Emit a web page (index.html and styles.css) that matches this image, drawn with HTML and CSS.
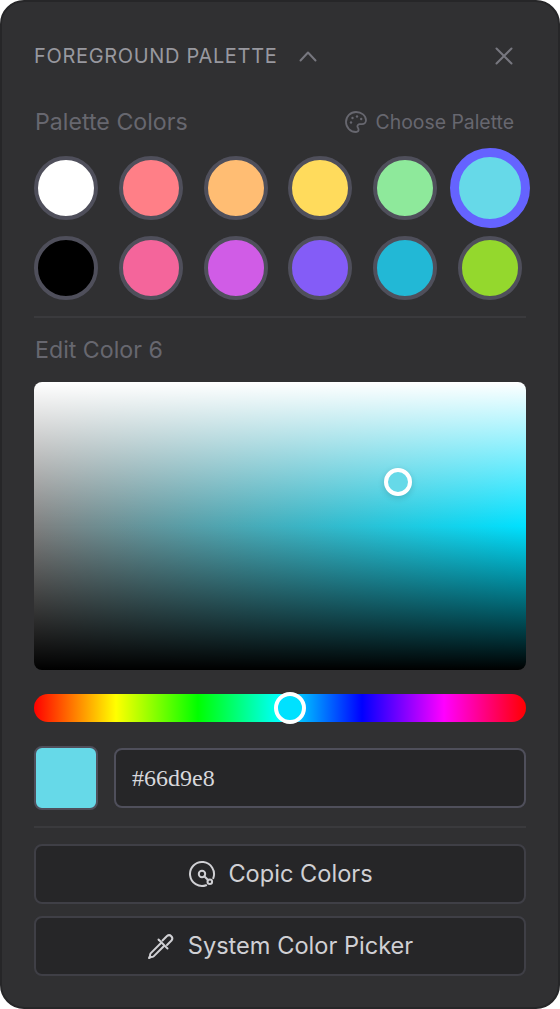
FILE: index.html
```html
<!DOCTYPE html>
<html lang="en">
<head>
<meta charset="utf-8">
<title>Foreground Palette</title>
<link rel="stylesheet" href="styles.css">
</head>
<body>
<main class="panel">
  <header class="head">
    <div class="head-left">
      <span class="title">FOREGROUND PALETTE</span>
      <svg class="chev" width="24" height="24" viewBox="0 0 24 24"><path d="M4.500 16.500 12 8.500l7.500 8"/></svg>
    </div>
    <svg class="close" width="24" height="24" viewBox="0 0 24 24"><path d="M4.500 4.500l15 15M19.500 4.500l-15 15"/></svg>
  </header>
  <div class="sub-row">
    <span class="label">Palette Colors</span>
    <span class="choose">
      <svg class="pal" width="24" height="24" viewBox="0 0 24 24"><path d="M12 2a10 10 0 1 0 0 20c1.700 0 2.600-1.100 2.600-2.400 0-.7-.3-1.200-.6-1.700-.4-.6-.6-1-.6-1.600 0-1.200 1-2.100 2.200-2.100H18c2.200 0 4-1.700 4-3.900C22 5.600 17.500 2 12 2z"/><circle class="dot" cx="7" cy="12.500" r="1.200"/><circle class="dot" cx="8.500" cy="8" r="1.200"/><circle class="dot" cx="13" cy="6.500" r="1.200"/><circle class="dot" cx="17.200" cy="9" r="1.200"/></svg>
      Choose Palette
    </span>
  </div>
  <div class="swatches">
    <span class="sw c1"></span><span class="sw c2"></span><span class="sw c3"></span><span class="sw c4"></span><span class="sw c5"></span><span class="sw c6 sel"></span>
    <span class="sw c7"></span><span class="sw c8"></span><span class="sw c9"></span><span class="sw c10"></span><span class="sw c11"></span><span class="sw c12"></span>
  </div>
  <hr class="rule r1">
  <div class="label edit">Edit Color 6</div>
  <div class="sv"><span class="sv-thumb"></span></div>
  <div class="hue"><span class="hue-thumb"></span></div>
  <div class="hex-row">
    <span class="preview"></span>
    <div class="hex">#66d9e8</div>
  </div>
  <hr class="rule r2">
  <button class="btn" type="button">
    <svg class="copic" width="28" height="28" viewBox="0 0 28 28"><path d="M18.100 25.300A12 12 0 1 1 25.300 18.100"/><circle cx="14" cy="14" r="3.200"/><path d="M16.300 16.300l4 4"/><circle cx="21.800" cy="21.800" r="2.300"/></svg>
    <span class="btn-text">Copic Colors</span>
  </button>
  <button class="btn btn2" type="button">
    <svg width="28" height="28" viewBox="0 0 28 28"><path d="M14 11 3.600 21.400C3 22 3 23 3 24l-1 2 2-1c1 0 2 0 2.600-.6L17 14"/><path d="M15.500 8.500 20 4a3.200 3.200 0 0 1 4.500 4.500L20 13"/><path d="M11.500 7.500l9 9"/></svg>
    <span class="btn-text">System Color Picker</span>
  </button>
</main>
</body>
</html>
```
FILE: styles.css
```css
* { box-sizing: border-box; }
html, body { margin: 0; padding: 0; background: #fff; }
body { width: 560px; height: 1009px; overflow: hidden; font-family: Inter, "Liberation Sans", sans-serif; }
.panel {
  width: 560px; height: 1009px;
  background: #303032;
  border: 2px solid #262628;
  border-radius: 24px;
  padding: 0 32px;
  display: flex; flex-direction: column;
}
.head { display: flex; justify-content: space-between; align-items: center; height: 28px; margin-top: 40px; }
.head-left { display: flex; align-items: center; gap: 19px; }
.title { font-size: 20px; font-weight: 400; letter-spacing: 0.67px; color: #98989f; }
svg { fill: none; stroke-linecap: round; stroke-linejoin: round; flex: none; }
.chev, .close { stroke: #77777f; stroke-width: 2; }
.close { margin-right: 10px; }
.sub-row { display: flex; justify-content: space-between; align-items: center; margin-top: 37px; height: 30px; padding-left: 1px; }
.label { font-size: 23.2px; color: #67676f; }
.choose { display: flex; align-items: center; gap: 8px; font-size: 19.4px; color: #67676f; margin-right: 12px; }
.pal { stroke: #67676f; stroke-width: 1.8; }
.pal .dot { fill: #67676f; stroke: none; }
.swatches { display: grid; grid-template-columns: repeat(6, 64px); justify-content: space-between; row-gap: 16px; margin-top: 19px; margin-right: 4px; }
.sw { width: 64px; height: 64px; border-radius: 50%; border: 4px solid #4f4f5b; }
.sel { border: 9px solid #6563ff; width: 80px; height: 80px; margin: -8px; }
.c1 { background: #fff; } .c2 { background: #ff7f87; } .c3 { background: #ffbd73; } .c4 { background: #ffdb5c; }
.c5 { background: #8ee99b; } .c6 { background: #66d9e8; } .c7 { background: #000; } .c8 { background: #f4659b; }
.c9 { background: #d05ce6; } .c10 { background: #845cf7; } .c11 { background: #22b8d6; } .c12 { background: #94d82d; }
.rule { border: 0; height: 2px; background: #3a3a3d; margin: 0; width: 492px; flex: none; }
.r1 { margin-top: 16px; }
.edit { margin-top: 18px; height: 28px; line-height: 28px; padding-left: 1px; }
.sv {
  position: relative; margin-top: 18px; width: 492px; height: 288px; border-radius: 8px;
  background: linear-gradient(to bottom, #fff, rgba(255,255,255,0) 50%, rgba(0,0,0,0) 50%, #000),
              linear-gradient(to right, #808080, #00e1ff);
}
.sv-thumb {
  position: absolute; left: 350px; top: 86px; width: 28px; height: 28px; border-radius: 50%;
  border: 4px solid #fff; background: #66d9e8; box-shadow: 0 2px 6px rgba(0,0,0,.15);
}
.hue {
  position: relative; margin-top: 24px; width: 492px; height: 28px; border-radius: 14px;
  background: linear-gradient(to right, #f00, #ff0 16.67%, #0f0 33.33%, #0ff 50%, #00f 66.67%, #f0f 83.33%, #f00);
}
.hue-thumb {
  position: absolute; left: 240px; top: -2px; width: 32px; height: 32px; border-radius: 50%;
  border: 4px solid #fff; background: #00e1ff;
}
.hex-row { display: flex; align-items: center; gap: 16px; margin-top: 24px; width: 492px; }
.preview { width: 64px; height: 64px; border-radius: 8px; background: #66d9e8; border: 2px solid #4f4f5b; }
.hex {
  flex: 1; height: 60px; border-radius: 8px; background: #262628; border: 2px solid #4f4f5b;
  font-family: "Liberation Serif", serif; font-size: 24px; color: #d8d8dc; padding-left: 16px;
  display: flex; align-items: center;
}
.r2 { margin-top: 16px; }
.btn {
  display: flex; align-items: center; justify-content: center; gap: 13px;
  width: 492px; height: 60px; margin-top: 16px; border-radius: 8px;
  background: #262628; border: 2px solid #3f3f46;
  font-family: Inter, "Liberation Sans", sans-serif; font-size: 23.6px; color: #d0d0d4;
}
.btn2 { margin-top: 12px; }
.btn-text { padding-bottom: 2px; }
.copic { margin-left: 1px; margin-right: -1px; }
.btn svg { stroke: #d0d0d4; stroke-width: 2; }
```
